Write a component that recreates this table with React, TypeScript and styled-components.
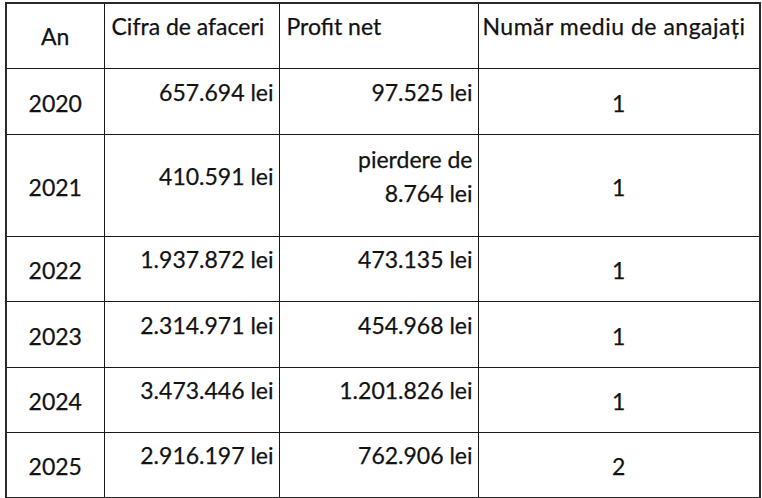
import React from 'react';
import styled, { createGlobalStyle } from 'styled-components';

const GlobalStyle = createGlobalStyle`
	html, body {
		margin: 0;
		padding: 0;
		background: #ffffff;
	}
	body {
		font-family: Lato, 'Liberation Sans', sans-serif;
		color: #121212;
	}
`;

const Page = styled.div`
	padding: 2px 0 0 5px;
`;

const Table = styled.table`
	border-collapse: collapse;
	table-layout: fixed;
	width: 754px;
	border: 2px solid #2a2a2a;
	font-size: 23px;
	line-height: 34px;
	-webkit-text-stroke: 0.25px #121212;
`;

const Row = styled.tr<{ $h: number }>`
	height: ${(p) => p.$h}px;
`;

type Align = 'left' | 'right' | 'center';

const Cell = styled.td<{ $align: Align; $lift?: boolean }>`
	border: 1px solid #1a1a1a;
	text-align: ${(p) => p.$align};
	vertical-align: middle;
	padding: ${(p) => (p.$lift ? '0 5px 19px 7px' : '3px 5px 0 5px')};
	white-space: nowrap;
`;

const YearHead = styled(Cell)`
	padding-top: 0;
`;

const WideHead = styled(Cell)`
	padding-left: 4px;
	letter-spacing: 0.5px;
`;

const rows = [
	{ year: '2020', ca: '657.694 lei', profit: ['97.525 lei'], emp: '1', h: 66 },
	{ year: '2021', ca: '410.591 lei', profit: ['pierdere de', '8.764 lei'], emp: '1', h: 102 },
	{ year: '2022', ca: '1.937.872 lei', profit: ['473.135 lei'], emp: '1', h: 65 },
	{ year: '2023', ca: '2.314.971 lei', profit: ['454.968 lei'], emp: '1', h: 66 },
	{ year: '2024', ca: '3.473.446 lei', profit: ['1.201.826 lei'], emp: '1', h: 65 },
	{ year: '2025', ca: '2.916.197 lei', profit: ['762.906 lei'], emp: '2', h: 66 },
];

const App = () => {
	return (
		<Page>
			<GlobalStyle />
			<Table>
				<colgroup>
					<col style={{ width: 98 }} />
					<col style={{ width: 175 }} />
					<col style={{ width: 199 }} />
					<col style={{ width: 282 }} />
				</colgroup>
				<tbody>
					<Row $h={65}>
						<YearHead $align='center'>An</YearHead>
						<Cell $align='left' $lift>
							Cifra de afaceri
						</Cell>
						<Cell $align='left' $lift>
							Profit net
						</Cell>
						<WideHead $align='left' $lift>
							Număr mediu de angajați
						</WideHead>
					</Row>
					{rows.map((r) => (
						<Row key={r.year} $h={r.h}>
							<Cell $align='center'>{r.year}</Cell>
							<Cell $align='right' $lift>
								{r.ca}
							</Cell>
							<Cell $align='right' $lift>
								{r.profit.map((line, i) => (
									<div key={i}>{line}</div>
								))}
							</Cell>
							<Cell $align='center'>{r.emp}</Cell>
						</Row>
					))}
				</tbody>
			</Table>
		</Page>
	);
};

export default App;
